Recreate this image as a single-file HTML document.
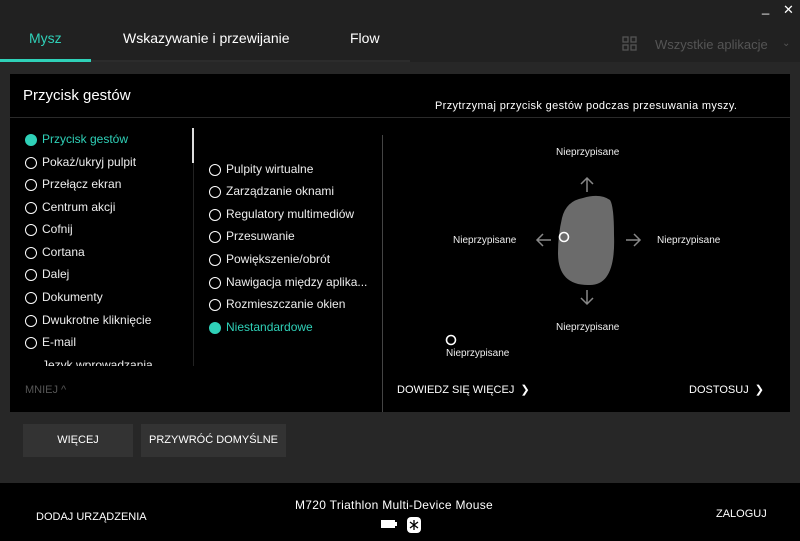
<!DOCTYPE html><html><head><meta charset="utf-8"><style>
*{margin:0;padding:0;box-sizing:border-box}
body{width:800px;height:541px;background:#272727;font-family:"Liberation Sans",sans-serif;color:#fff;position:relative;overflow:hidden}
.a{position:absolute;white-space:nowrap}
.top{position:absolute;left:0;top:0;width:800px;height:62px;background:#212121}
.li{position:absolute;font-size:12px;color:#eee;white-space:nowrap}
.li:before{content:"";position:absolute;left:-17px;top:2px;width:10px;height:10px;border:1.6px solid #fff;border-radius:50%}
.li.on{color:#2fd1b8}.li.on:before{background:#2fd1b8;border-color:#2fd1b8}
.np{font-size:10px;color:#eee}
.btn{position:absolute;top:424px;height:33px;background:#333;font-size:11px;text-align:center;line-height:33px}
</style></head><body>
<div class="top"></div>
<div class="a" style="left:783px;top:2px;font-size:13px">✕</div>
<div class="a" style="left:762px;top:0px;font-size:13px">_</div>
<div class="a" style="left:29px;top:30px;font-size:14px;color:#2fd1b8">Mysz</div>
<div class="a" style="left:123px;top:30px;font-size:14px">Wskazywanie i przewijanie</div>
<div class="a" style="left:350px;top:30px;font-size:14px">Flow</div>
<div class="a" style="left:0;top:60px;width:410px;height:2px;background:#2c2c2c"></div>
<div class="a" style="left:0;top:59px;width:91px;height:3px;background:#2fd1b8"></div>
<svg class="a" style="left:622px;top:36px" width="16" height="16"><g fill="none" stroke="#555" stroke-width="1.3"><rect x="1" y="1" width="5" height="5"/><rect x="9" y="1" width="5" height="5"/><rect x="1" y="9" width="5" height="5"/><rect x="9" y="9" width="5" height="5"/></g></svg>
<div class="a" style="left:655px;top:37px;font-size:13px;color:#555">Wszystkie aplikacje</div>
<div class="a" style="left:782px;top:38px;font-size:10px;color:#555">⌄</div>
<div class="a" style="left:10px;top:74px;width:780px;height:338px;background:#000"></div>
<div class="a" style="left:10px;top:117px;width:780px;height:1px;background:#2a2a2a"></div>
<div class="a" style="left:23px;top:87px;font-size:15px">Przycisk gestów</div>
<div class="a" style="left:435px;top:100px;font-size:11px;letter-spacing:0.35px">Przytrzymaj przycisk gestów podczas przesuwania myszy.</div>
<div style="position:absolute;left:42px;top:0;">
<div class="li on" style="top:132px">Przycisk gestów</div>
<div class="li" style="top:155px">Pokaż/ukryj pulpit</div>
<div class="li" style="top:177px">Przełącz ekran</div>
<div class="li" style="top:200px">Centrum akcji</div>
<div class="li" style="top:222px">Cofnij</div>
<div class="li" style="top:245px">Cortana</div>
<div class="li" style="top:267px">Dalej</div>
<div class="li" style="top:290px">Dokumenty</div>
<div class="li" style="top:313px">Dwukrotne kliknięcie</div>
<div class="li" style="top:335px">E-mail</div>
<div class="li" style="top:358px;height:8px;overflow:hidden">Język wprowadzania</div>
</div>
<div class="a" style="left:193px;top:128px;width:1px;height:238px;background:#222"></div>
<div class="a" style="left:192px;top:128px;width:2px;height:35px;background:#ddd"></div>
<div style="position:absolute;left:226px;top:0">
<div class="li" style="top:162px">Pulpity wirtualne</div>
<div class="li" style="top:184px">Zarządzanie oknami</div>
<div class="li" style="top:207px">Regulatory multimediów</div>
<div class="li" style="top:229px">Przesuwanie</div>
<div class="li" style="top:252px">Powiększenie/obrót</div>
<div class="li" style="top:275px">Nawigacja między aplika...</div>
<div class="li" style="top:297px">Rozmieszczanie okien</div>
<div class="li on" style="top:320px">Niestandardowe</div>
</div>
<div class="a" style="left:25px;top:384px;font-size:11px;color:#555">MNIEJ ^</div>
<div class="a" style="left:382px;top:135px;width:1px;height:277px;background:#444"></div>
<div class="a np" style="left:556px;top:147px">Nieprzypisane</div>
<div class="a np" style="left:453px;top:235px">Nieprzypisane</div>
<div class="a np" style="left:657px;top:235px">Nieprzypisane</div>
<div class="a np" style="left:556px;top:322px">Nieprzypisane</div>
<div class="a np" style="left:446px;top:348px">Nieprzypisane</div>
<svg class="a" style="left:440px;top:140px" width="300" height="220">
<path d="M143 58 Q160 53 170 60 Q174 66 174 95 Q176 145 150 145 Q118 146 118 113 Q118 95 122 78 Q126 61 143 58 Z" fill="#6b6b6b"/>
<g stroke="#888" stroke-width="1.5" fill="none">
<path d="M147 38 V52 M141 44 L147 38 L153 44"/>
<path d="M147 150 V164 M141 158 L147 164 L153 158"/>
<path d="M97 100 H111 M103 94 L97 100 L103 106"/>
<path d="M186 100 H200 M194 94 L200 100 L194 106"/>
</g>
<circle cx="124" cy="97" r="4.5" fill="none" stroke="#fff" stroke-width="1.6"/>
<circle cx="11" cy="200" r="4.5" fill="none" stroke="#fff" stroke-width="1.6"/>
</svg>
<div class="a" style="left:397px;top:383px;font-size:11px">DOWIEDZ SIĘ WIĘCEJ &nbsp;❯</div>
<div class="a" style="left:689px;top:383px;font-size:11px">DOSTOSUJ &nbsp;❯</div>
<div class="btn" style="left:23px;width:110px">WIĘCEJ</div>
<div class="btn" style="left:141px;width:145px">PRZYWRÓĆ DOMYŚLNE</div>
<div class="a" style="left:0;top:483px;width:800px;height:58px;background:#000"></div>
<div class="a" style="left:36px;top:511px;font-size:11px">DODAJ URZĄDZENIA</div>
<div class="a" style="left:295px;top:498px;font-size:12px;letter-spacing:0.3px">M720 Triathlon Multi-Device Mouse</div>
<div class="a" style="left:716px;top:508px;font-size:11px">ZALOGUJ</div>
<svg class="a" style="left:381px;top:516px" width="40" height="18"><rect x="0" y="4" width="14" height="8" fill="#fff"/><rect x="14" y="6" width="2" height="4" fill="#fff"/><rect x="26" y="1" width="14" height="16" rx="4" fill="#fff"/><path d="M33 4v10M29 6l8 6M37 6l-8 6" stroke="#000" stroke-width="1.3"/></svg>
</body></html>
